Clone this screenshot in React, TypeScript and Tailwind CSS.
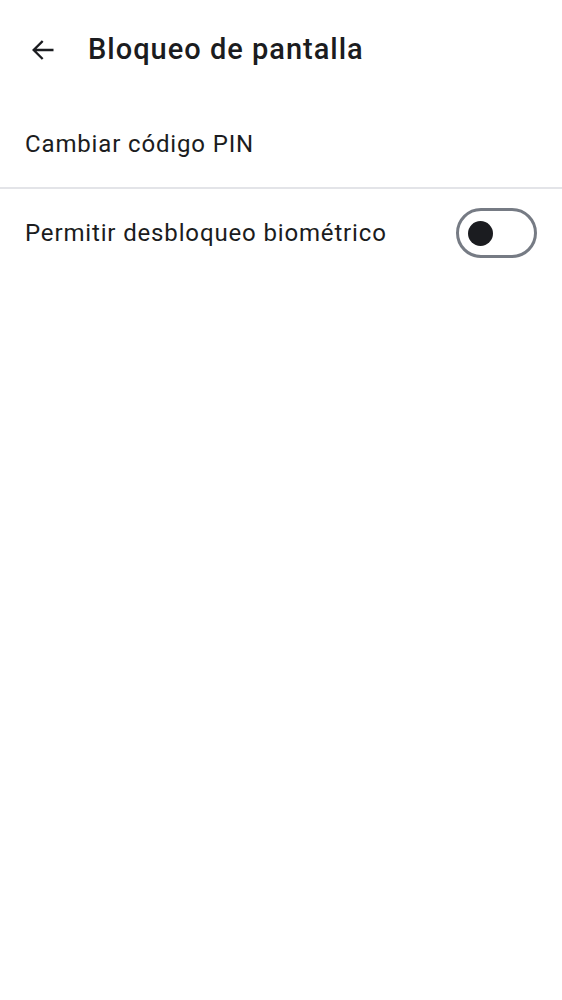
import { useState } from 'react'

export default function App() {
  const [biometric, setBiometric] = useState(false)

  return (
    <div className="min-h-screen w-full bg-white text-[#1b1c20]" style={{ fontFamily: 'Roboto, "Noto Sans", sans-serif' }}>
      {/* Header */}
      <header className="flex h-[100px] items-center pl-[28px]">
        <button className="flex h-[30px] w-[30px] items-center justify-center" aria-label="Volver">
          <svg width="28" height="28" viewBox="0 0 24 24" fill="none">
            <path d="M20 12H4.5M11 5l-7 7 7 7" stroke="#1b1c20" strokeWidth="2" strokeLinecap="square" />
          </svg>
        </button>
        <h1 className="ml-[30px] text-[29px] font-medium tracking-[1px]">Bloqueo de pantalla</h1>
      </header>

      {/* Settings */}
      <div>
        <div className="flex h-[87px] items-center px-[25px]">
          <span className="text-[24px] tracking-[0.85px]">Cambiar código PIN</span>
        </div>
        <div className="h-[2px] bg-[#e3e4e8]" />
        <div className="flex h-[88px] items-center justify-between pl-[25px] pr-[25px]">
          <span className="text-[24px] tracking-[0.85px]">Permitir desbloqueo biométrico</span>
          <button
            onClick={() => setBiometric(!biometric)}
            className="flex h-[50px] w-[81px] items-center rounded-full border-[3px] border-[#767b84] px-[9px]"
          >
            <span className="block h-[25px] w-[25px] rounded-full bg-[#1b1c20]" />
          </button>
        </div>
      </div>
    </div>
  )
}
